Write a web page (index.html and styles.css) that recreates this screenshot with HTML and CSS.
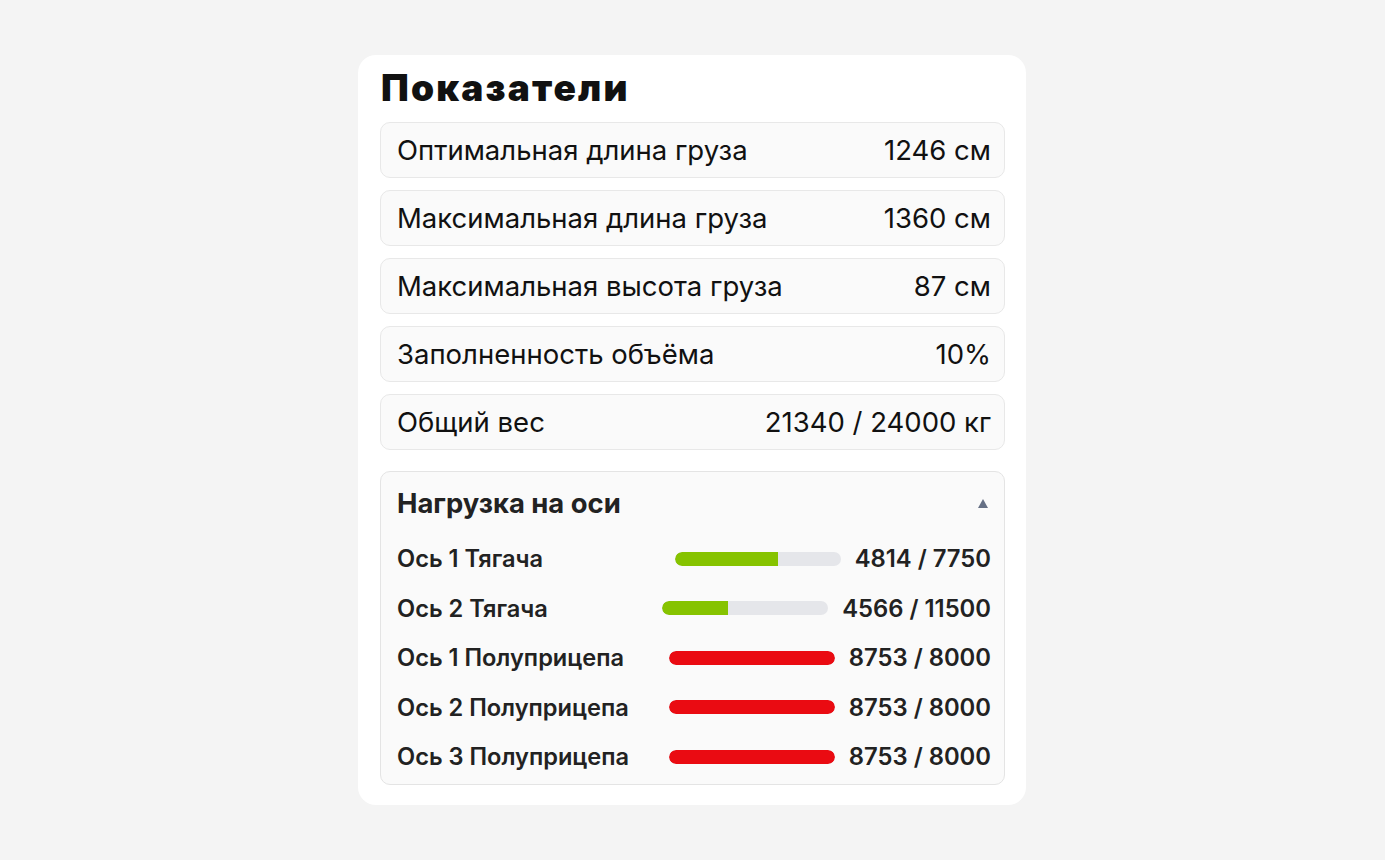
FILE: index.html
```html
<!DOCTYPE html>
<html lang="ru">
<head>
<meta charset="utf-8">
<title>Показатели</title>
<link rel="stylesheet" href="styles.css">
</head>
<body>
<div class="page">
  <section class="card">
    <h1 class="title">Показатели</h1>
    <div class="rows">
      <div class="row"><span>Оптимальная длина груза</span><span>1246 см</span></div>
      <div class="row"><span>Максимальная длина груза</span><span>1360 см</span></div>
      <div class="row"><span>Максимальная высота груза</span><span>87 см</span></div>
      <div class="row"><span>Заполненность объёма</span><span>10%</span></div>
      <div class="row"><span>Общий вес</span><span>21340 / 24000 кг</span></div>
    </div>
    <div class="axes">
      <div class="axes-head">
        <span class="axes-title">Нагрузка на оси</span>
        <span class="caret"></span>
      </div>
      <div class="axis">
        <span class="axis-label">Ось 1 Тягача</span>
        <div class="axis-right">
          <div class="bar"><div class="fill ok" style="width:62.1%"></div></div>
          <span class="axis-val">4814 / 7750</span>
        </div>
      </div>
      <div class="axis">
        <span class="axis-label">Ось 2 Тягача</span>
        <div class="axis-right">
          <div class="bar"><div class="fill ok" style="width:39.7%"></div></div>
          <span class="axis-val">4566 / 11500</span>
        </div>
      </div>
      <div class="axis">
        <span class="axis-label">Ось 1 Полуприцепа</span>
        <div class="axis-right">
          <div class="bar"><div class="fill over" style="width:100%"></div></div>
          <span class="axis-val">8753 / 8000</span>
        </div>
      </div>
      <div class="axis">
        <span class="axis-label">Ось 2 Полуприцепа</span>
        <div class="axis-right">
          <div class="bar"><div class="fill over" style="width:100%"></div></div>
          <span class="axis-val">8753 / 8000</span>
        </div>
      </div>
      <div class="axis">
        <span class="axis-label">Ось 3 Полуприцепа</span>
        <div class="axis-right">
          <div class="bar"><div class="fill over" style="width:100%"></div></div>
          <span class="axis-val">8753 / 8000</span>
        </div>
      </div>
    </div>
  </section>
</div>
</body>
</html>
```
FILE: styles.css
```css
* { box-sizing: border-box; }
html, body { margin: 0; padding: 0; }
body {
  background: #f4f4f4;
  font-family: Inter, "Noto Sans", sans-serif;
  color: #111;
}
.page {
  width: 1385px;
  height: 860px;
  padding-top: 55px;
  padding-left: 358px;
}
.card {
  width: 668px;
  height: 750px;
  background: #fff;
  border-radius: 18px;
  padding: 8px 21px 0 23px;
}
.title {
  margin: 0 0 9px 0;
  font-size: 37px;
  font-weight: 900;
  line-height: 50px;
  color: #111;
  letter-spacing: 2.2px;
}
.rows {
  display: flex;
  flex-direction: column;
  gap: 12px;
  margin-left: -1px;
}
.row {
  height: 56px;
  display: flex;
  align-items: center;
  justify-content: space-between;
  padding: 0 13px 0 16px;
  background: #fafafa;
  border: 1px solid #e8e8e8;
  border-radius: 10px;
  font-size: 27.5px;
  color: #111;
}
.axes {
  margin-top: 21px;
  margin-left: -1px;
  height: 314px;
  background: #fafafa;
  border: 1px solid #e4e4e4;
  border-radius: 10px;
  padding: 11px 13px 0 16px;
}
.axes-head {
  display: flex;
  justify-content: space-between;
  align-items: center;
  height: 40px;
  margin-bottom: 11px;
}
.axes-title {
  font-size: 27.4px;
  font-weight: 700;
  color: #222;
}
.caret {
  width: 0;
  height: 0;
  border-left: 5px solid transparent;
  border-right: 5px solid transparent;
  border-bottom: 9px solid #667085;
  margin-right: 3px;
}
.axis {
  height: 49.5px;
  display: flex;
  align-items: center;
  justify-content: space-between;
}
.axis-label {
  font-size: 23.6px;
  font-weight: 600;
  color: #222;
}
.axis-right {
  display: flex;
  align-items: center;
  gap: 14px;
}
.bar {
  width: 166px;
  height: 14px;
  background: #e5e6ea;
  border-radius: 7px;
  overflow: hidden;
}
.fill {
  height: 100%;
  border-radius: 7px 0 0 7px;
}
.fill.ok { background: #86c300; }
.fill.over { background: #ea0b12; border-radius: 7px; }
.axis-val {
  font-size: 23.8px;
  font-weight: 600;
  color: #222;
}
```
